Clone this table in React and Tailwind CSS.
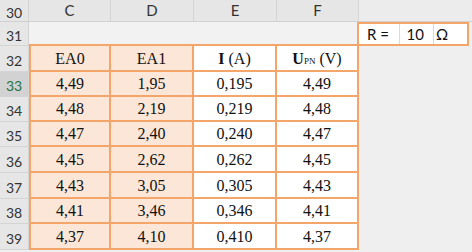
import React from "react";

const ORANGE = "border-[#f4a66a]";

const rows = [
  { n: 33, c: "4,49", d: "1,95", e: "0,195", f: "4,49", h: 25, active: true },
  { n: 34, c: "4,48", d: "2,19", e: "0,219", f: "4,48", h: 25 },
  { n: 35, c: "4,47", d: "2,40", e: "0,240", f: "4,47", h: 25 },
  { n: 36, c: "4,45", d: "2,62", e: "0,262", f: "4,45", h: 26 },
  { n: 37, c: "4,43", d: "3,05", e: "0,305", f: "4,43", h: 26 },
  { n: 38, c: "4,41", d: "3,46", e: "0,346", f: "4,41", h: 25 },
  { n: 39, c: "4,37", d: "4,10", e: "0,410", f: "4,37", h: 26 },
];

const sans = { fontFamily: "Lato, 'Liberation Sans', sans-serif" };
const serif = { fontFamily: "'Liberation Serif', 'Times New Roman', serif" };

function RowHead({ n, active }) {
  return (
    <div
      className={
        "w-[29px] shrink-0 flex items-center justify-center pt-[3px] border-b border-r border-[#d4d4d4] text-[14px] " +
        (active ? "bg-[#d2d2d2] text-[#217346]" : "bg-[#e6e6e6] text-[#333]")
      }
      style={sans}
    >
      {n}
    </div>
  );
}

function Cell({ children, width, fill, first }) {
  return (
    <div
      className={
        "shrink-0 flex items-center justify-center pt-[1px] border-r-2 border-b-2 text-[16px] text-[#111] " +
        ORANGE +
        (first ? " border-l-2" : "") +
        (fill ? " bg-[#fce6d8]" : " bg-white")
      }
      style={{ ...serif, width }}
    >
      {children}
    </div>
  );
}

export default function App() {
  return (
    <div className="w-[472px] h-[252px] overflow-hidden bg-[#efefef] select-none">
      {/* column headers, row 30 */}
      <div className="flex h-[22px] bg-[#e6e6e6] border-b border-[#d0d0d0] text-[15px] text-[#333]" style={sans}>
        <div className="w-[29px] shrink-0 flex items-center justify-center pt-[3px] text-[14px] border-r border-[#d4d4d4]">30</div>
        <div className="w-[82px] shrink-0 flex items-center justify-center border-r border-[#d4d4d4]">C</div>
        <div className="w-[83px] shrink-0 flex items-center justify-center border-r border-[#d4d4d4]">D</div>
        <div className="w-[83px] shrink-0 flex items-center justify-center border-r border-[#d4d4d4]">E</div>
        <div className="w-[82px] shrink-0 flex items-center justify-center border-r border-[#d4d4d4]">F</div>
        <div className="flex-1 bg-[#ececec]" />
      </div>

      {/* row 31 */}
      <div className="flex h-[24px]">
        <RowHead n={31} />
        <div className={"w-[328px] shrink-0 bg-[#f2f2f2] border-b-2 " + ORANGE} />
        <div
          className={"w-[112px] shrink-0 flex bg-white border-2 text-[15px] text-[#111] " + ORANGE}
          style={sans}
        >
          <div className="w-[40px] flex items-center pl-[8px]">R =</div>
          <div className="w-[34px] flex items-center justify-end pr-[9px] border-l border-[#dadada]">10</div>
          <div className="flex-1 flex items-center pl-[2px] border-l border-[#dadada]">Ω</div>
        </div>
      </div>

      {/* row 32 : table headings */}
      <div className="flex h-[26px]">
        <RowHead n={32} />
        <Cell width={82} fill first>EA0</Cell>
        <Cell width={83} fill>EA1</Cell>
        <Cell width={83}>
          <b>I</b>&nbsp;(A)
        </Cell>
        <Cell width={82}>
          <b>U</b>
          <span className="text-[9px] relative top-[3px]">PN</span>&nbsp;(V)
        </Cell>
        <div className="flex-1" />
      </div>

      {rows.map((r) => (
        <div key={r.n} className="flex" style={{ height: r.h }}>
          <RowHead n={r.n} active={r.active} />
          <Cell width={82} fill first>{r.c}</Cell>
          <Cell width={83} fill>{r.d}</Cell>
          <Cell width={83}>{r.e}</Cell>
          <Cell width={82}>{r.f}</Cell>
          <div className="flex-1" />
        </div>
      ))}
    </div>
  );
}
